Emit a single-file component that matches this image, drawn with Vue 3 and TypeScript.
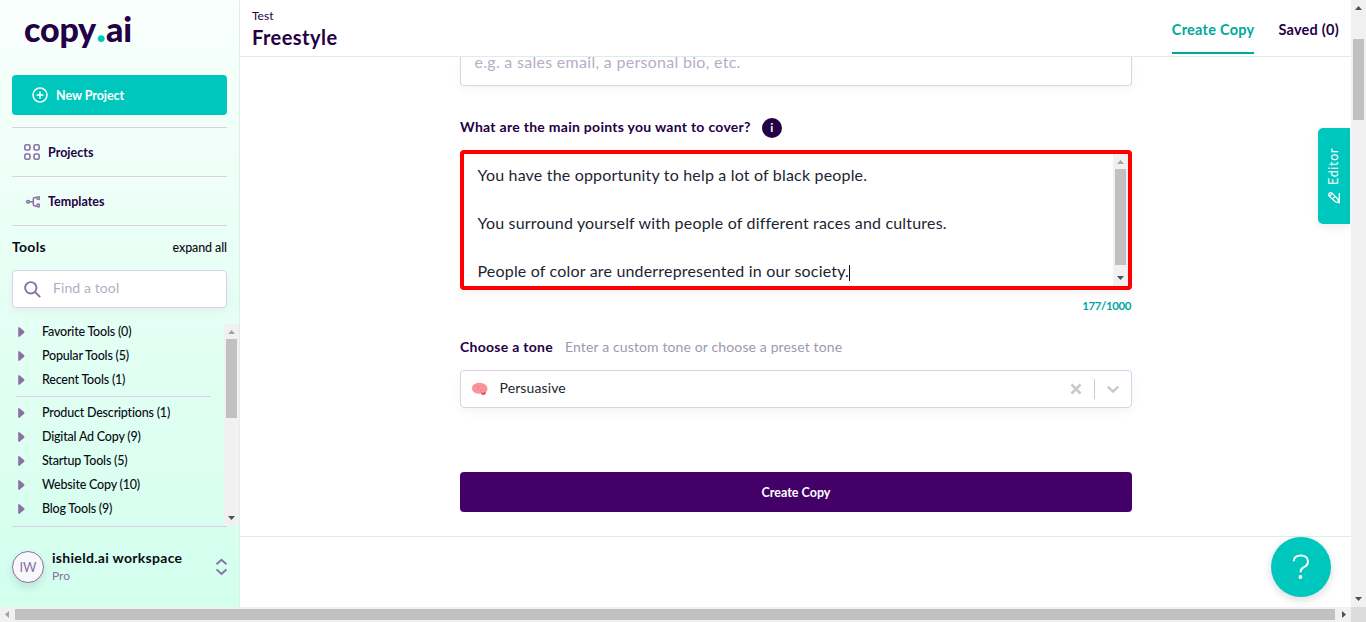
<script setup lang="ts">
interface Tool { name: string; count: number }

const pinned: Tool[] = [
  { name: 'Favorite Tools', count: 0 },
  { name: 'Popular Tools', count: 5 },
  { name: 'Recent Tools', count: 1 },
]
const categories: Tool[] = [
  { name: 'Product Descriptions', count: 1 },
  { name: 'Digital Ad Copy', count: 9 },
  { name: 'Startup Tools', count: 5 },
  { name: 'Website Copy', count: 10 },
  { name: 'Blog Tools', count: 9 },
]
const points: string[] = [
  'You have the opportunity to help a lot of black people.',
  'You surround yourself with people of different races and cultures.',
  'People of color are underrepresented in our society.',
]
</script>

<template>
  <div class="window">
    <aside class="sidebar">
      <div class="logo">copy<span class="logo-dot">.</span>ai</div>
      <button class="new-project">
        <svg width="16" height="16" viewBox="0 0 16 16" fill="none" stroke="#fff" stroke-width="1.5"><circle cx="8" cy="8" r="7" /><path d="M8 4.5v7M4.5 8h7" /></svg>
        <span>New Project</span>
      </button>
      <nav>
        <a class="nav-item">
          <svg class="nav-icon" width="16" height="16" viewBox="0 0 16 16" fill="none" stroke="#8b70a3" stroke-width="1.6"><rect x=".8" y=".8" width="5.2" height="5.2" rx="1.5" /><rect x="10" y=".8" width="5.2" height="5.2" rx="1.5" /><rect x=".8" y="10" width="5.2" height="5.2" rx="1.5" /><rect x="10" y="10" width="5.2" height="5.2" rx="1.5" /></svg>
          <span>Projects</span>
        </a>
        <a class="nav-item">
          <svg class="nav-icon" width="16" height="16" viewBox="0 0 16 16" fill="none" stroke="#8b70a3" stroke-width="1.5"><circle cx="4.1" cy="8.8" r="1.4" /><circle cx="14.2" cy="5.1" r="1.4" /><circle cx="14.2" cy="12.5" r="1.4" /><path d="M5.6 8.8h3.6M12.7 4.5h-1.8q-1.6 0-1.6 1.6v5.2q0 1.6 1.6 1.6h1.8" /></svg>
          <span>Templates</span>
        </a>
      </nav>
      <div class="tools-head"><strong>Tools</strong><span>expand all</span></div>
      <div class="search">
        <svg width="17" height="17" viewBox="0 0 17 17" fill="none" stroke="#8b70a3" stroke-width="1.9"><circle cx="6.8" cy="6.8" r="5.7" /><path d="M11 11l5.2 5.2" /></svg>
        <span>Find a tool</span>
      </div>
      <div class="tool-panel">
        <div class="tool-list">
          <div v-for="t in pinned" :key="t.name" class="tool">
            <svg width="7" height="10" viewBox="0 0 7 10"><path d="M.2.5Q.2 0 1.5.3L6 3.9Q7 5 6 6.1L1.5 9.7Q.2 10 .2 9.5z" fill="#8b70a3" /></svg>
            <span>{{ t.name }} ({{ t.count }})</span>
          </div>
          <div class="tool-rule"></div>
          <div v-for="t in categories" :key="t.name" class="tool">
            <svg width="7" height="10" viewBox="0 0 7 10"><path d="M.2.5Q.2 0 1.5.3L6 3.9Q7 5 6 6.1L1.5 9.7Q.2 10 .2 9.5z" fill="#8b70a3" /></svg>
            <span>{{ t.name }} ({{ t.count }})</span>
          </div>
        </div>
        <div class="vbar tool-bar">
          <svg class="arrow" width="15" height="15" viewBox="0 0 15 15"><path d="M4 10h7L7.5 6z" fill="#a3a3a3" /></svg>
          <div class="thumb"></div>
          <svg class="arrow" width="15" height="15" viewBox="0 0 15 15"><path d="M4 5h7L7.5 9z" fill="#505050" /></svg>
        </div>
      </div>
      <div class="workspace">
        <div class="avatar">IW</div>
        <div class="ws-text"><div class="ws-name">ishield.ai workspace</div><div class="ws-plan">Pro</div></div>
        <svg width="12" height="18" viewBox="0 0 12 18" fill="none" stroke="#8b70a3" stroke-width="1.9"><path d="M1.5 6.3l5-4.6 5 4.6M1.500 11.400l5 4.600 5-4.600" /></svg>
      </div>
    </aside>

    <main class="main">
      <header class="header">
        <div class="titles"><div class="project">Test</div><h1>Freestyle</h1></div>
        <div class="tabs"><a class="tab active">Create Copy</a><a class="tab saved">Saved (0)</a></div>
      </header>
      <section class="form">
        <div class="first-input"><span>e.g. a sales email, a personal bio, etc.</span></div>
        <div class="label-row points-label"><strong>What are the main points you want to cover?</strong><span class="info">i</span></div>
        <div class="textarea">
          <div class="text"><p v-for="(p, i) in points" :key="p">{{ p }}<i v-if="i === points.length - 1" class="caret"></i></p></div>
          <div class="vbar area-bar">
            <svg class="arrow" width="15" height="15" viewBox="0 0 15 15"><path d="M4 10h7L7.5 6z" fill="#a3a3a3" /></svg>
            <div class="thumb"></div>
            <svg class="arrow" width="15" height="15" viewBox="0 0 15 15"><path d="M4 5h7L7.5 9z" fill="#505050" /></svg>
          </div>
        </div>
        <div class="count">177/1000</div>
        <div class="label-row tone-label"><strong>Choose a tone</strong><span>Enter a custom tone or choose a preset tone</span></div>
        <div class="select">
          <svg width="18" height="16" viewBox="0 0 18 16"><path d="M.9 7C.9 4 4.3 1.7 8.5 1.700c4.500 0 8 2.400 8 6.100 0 1.700-.6 2.700-1.600 3.100.2 1.400-.7 2.600-2.200 2.700-1.300.1-2.300-.1-3.100-1.100-1.100.6-2.900.4-3.900-.1C3 12 .9 10 .9 7z" fill="#fb969a" /><path d="M9.800 11.600c1 .3 3 .1 5.100-.9.300 1.800-.8 3.300-2.300 3.400-1.400 0-2.300-.6-2.800-2.500z" fill="#d95e6b" /><path d="M3.500 6q1.500-.3 1.600-1.800M6 9q-.2-2 2-2.200.2-1.800-1-2.300M8.600 10q2.400 0 2.500-2M10.500 5q2-.4 2.600 1.200M13 9.200q1.300-.1 1.400-1.400M3.300 8.700q1 .2 1.300 1" fill="none" stroke="#e47680" stroke-width=".8" /></svg>
          <span class="value">Persuasive</span>
          <svg class="clear" width="12" height="12" viewBox="0 0 12 12" stroke="#c9c9c9" stroke-width="2.6"><path d="M1.500 1.500l9 9M10.500 1.500l-9 9" /></svg>
          <i class="divider"></i>
          <svg width="12" height="12" viewBox="0 0 12 12" fill="none" stroke="#c9c9c9" stroke-width="2.4"><path d="M.8 3.500L6 8.600 11.200 3.500" /></svg>
        </div>
        <button class="create">Create Copy</button>
      </section>
      <div class="section-rule"></div>
      <div class="editor">
        <span>Editor</span>
        <svg width="14" height="14" viewBox="0 0 14 14" fill="none" stroke="#fff" stroke-width="1.3"><path d="M2 2.600Q3.600.8 5.300 2.400L11 8.300 11.800 11.600 8.600 10.900 2.300 5.300Q.9 3.900 2 2.600zM2.600 5.200L5 2.600M5.400 7.800L8 5.400M12.300 2v10.500" /></svg>
      </div>
      <button class="help">
        <svg width="18" height="26" viewBox="0 0 18 26" fill="none" stroke="#fff" stroke-width="2"><path d="M1.700 7.300C1.700 3.800 4.500 1.500 8.700 1.500s7.300 2.300 7.300 5.900c0 3.100-1.900 4.700-4.400 6-2.200 1.100-3.100 2.100-3.100 4.900" /><circle cx="8.400" cy="23" r="1.900" fill="#fff" stroke="none" /></svg>
      </button>
    </main>

    <div class="vbar page-bar">
      <svg class="arrow" width="15" height="15" viewBox="0 0 15 15"><path d="M4 10h7L7.5 6z" fill="#505050" /></svg>
      <div class="thumb"></div>
      <svg class="arrow" width="15" height="15" viewBox="0 0 15 15"><path d="M4 5h7L7.5 9z" fill="#505050" /></svg>
    </div>
    <div class="hbar">
      <svg width="15" height="15" viewBox="0 0 15 15"><path d="M9 4v7L5 7.5z" fill="#a3a3a3" /></svg>
      <div class="hthumb"></div>
      <svg width="15" height="15" viewBox="0 0 15 15"><path d="M6 4v7l4-3.5z" fill="#505050" /></svg>
    </div>
    <div class="corner"></div>
  </div>
</template>

<style>
body { overflow: hidden; }
</style>

<style scoped>
* { box-sizing: border-box; }
.window {
  width: 1366px; height: 622px; display: grid;
  grid-template-columns: 240px 1111px 15px; grid-template-rows: 607px 15px;
  font-family: Lato, "Liberation Sans", sans-serif; color: #240046; background: #fff;
}
svg { display: block; flex: none; }
button { border: 0; font: inherit; }
.sidebar {
  display: flex; flex-direction: column; padding: 0 12px;
  background: linear-gradient(#f9fffc, #d2ffee); border-right: 1px solid #dcefe8;
}
.logo { height: 75px; padding: 8px 0 0 12px; font-size: 34px; line-height: 42px; font-weight: 900; letter-spacing: -.2px; }
.logo-dot { color: #00c7be; font-size: 42px; line-height: 0; letter-spacing: 0; }
.new-project {
  height: 40px; border-radius: 4px; background: #00c7be; color: #fff; display: flex; align-items: center;
  gap: 8px; padding: 0 20px; font-size: 12.5px; font-weight: 700; letter-spacing: -.05px; margin-bottom: 12px;
}
.nav-item {
  display: flex; align-items: center; gap: 8px; height: 49px; padding-left: 12px;
  border-top: 1px solid #ddd0e6; font-size: 12.5px; font-weight: 700; letter-spacing: .02px;
}
.search span { padding-bottom: 3px; }
.tools-head {
  height: 45px; padding-bottom: 2px; border-top: 1px solid #ddd0e6; display: flex; align-items: center; justify-content: space-between;
  color: #0b0b14; font-size: 12.5px; letter-spacing: -.1px; font-weight: 500;
}
.tools-head strong { font-size: 14px; letter-spacing: .3px; padding-bottom: 1px; }
.search {
  height: 38px; background: #fff; border: 1px solid #ddd0e6; border-radius: 4px; display: flex; align-items: center;
  padding-left: 11px; gap: 12px; color: #b9acc6; font-size: 14px; letter-spacing: .1px; box-shadow: 0 4px 10px rgba(36, 0, 70, .04);
}
.tool-panel { display: flex; width: 215px; height: 203px; margin-top: 16px; border-bottom: 1px solid #ddd0e6; }
.tool-list { width: 212px; flex: none; padding-left: 4px; margin-top: -4px; color: #0b0b14; font-size: 12.5px; font-weight: 500; letter-spacing: -.2px; }
.tool { display: flex; align-items: center; height: 24px; gap: 17px; padding-left: 2px; }
.tool span { padding-bottom: 1px; }
.tool-rule { height: 1px; background: #e2cfec; margin: 4px 13px 4px 0; }
.vbar { width: 15px; background: #f1f1f1; display: flex; flex-direction: column; justify-content: space-between; }
.thumb { width: 11px; margin: 0 2px auto; background: #c1c1c1; }
.tool-bar { flex: none; height: 202px; }
.tool-bar .thumb { height: 79px; }
.workspace { display: flex; align-items: center; height: 80px; }
.avatar {
  width: 32px; height: 32px; border: 1px solid #8b70a3; border-radius: 50%; background: #f8f7fa; color: #8b70a3;
  display: flex; align-items: center; justify-content: center; font-size: 13px; box-shadow: 0 4px 8px rgba(36, 0, 70, .12);
}
.ws-text { flex: 1; padding-left: 8px; }
.ws-name { font-size: 14px; line-height: 18px; font-weight: 700; color: #0b0b14; letter-spacing: .3px; }
.ws-plan { font-size: 12px; line-height: 18px; color: #8b70a3; }

.main { position: relative; overflow: hidden; }
.header { height: 57px; border-bottom: 1px solid #daf0e4; display: flex; justify-content: space-between; padding: 0 12px; }
.project { font-size: 12px; line-height: 16px; margin-top: 8px; }
h1 { margin: 0; font-size: 20px; line-height: 26px; font-weight: 700; letter-spacing: .45px; }
.tabs { display: flex; gap: 24px; }
.tab { height: 54px; line-height: 59px; font-size: 14.5px; font-weight: 700; letter-spacing: .25px; white-space: nowrap; }
.active { color: #00a79d; border-bottom: 2px solid #00a79d; }
.form { width: 672px; margin-left: 220px; }
.first-input {
  height: 29px; border: 1px solid #ddd0e6; border-top: 0; border-radius: 0 0 4px 4px; padding-left: 13.5px; color: #b9acc6;
  font-size: 16px; line-height: 10px; letter-spacing: .29px; box-shadow: 0 4px 10px rgba(36, 0, 70, .04);
}
.label-row { display: flex; align-items: center; font-size: 14px; letter-spacing: .28px; }
.label-row strong { padding-bottom: 2px; }
.points-label { height: 20px; margin: 32px 0 12px; gap: 11px; }
.points-label strong { padding-bottom: 3px; }
.info { width: 20px; height: 20px; border-radius: 50%; background: #240046; color: #fff; text-align: center; font-size: 12px; line-height: 20px; font-weight: 700; }
.textarea { height: 140px; border: 4px solid #f00; border-radius: 4px; display: flex; justify-content: space-between; box-shadow: 0 4px 10px rgba(36, 0, 70, .04); }
.text { padding: 9px 0 0 13.5px; font-size: 16px; line-height: 24px; color: #231f33; letter-spacing: .18px; }
.text p { margin: 0 0 24px; height: 24px; }
.caret { display: inline-block; width: 1px; height: 16px; background: #111; vertical-align: -4px; }
.area-bar .thumb { height: 96px; }
.count { margin-top: 8px; line-height: 16px; text-align: right; color: #00a79d; font-size: 11.5px; font-weight: 700; letter-spacing: -.4px; padding-right: 1px; }
.tone-label { height: 20px; margin: 23px 0 13px; gap: 12px; }
.tone-label span { color: #9b9bad; letter-spacing: .13px; padding-bottom: 2px; }
.select {
  height: 38px; border: 1px solid #ddd0e6; border-radius: 4px; display: flex; align-items: center;
  padding: 0 12px 0 10px; font-size: 14px; color: #231f33; box-shadow: 0 4px 10px rgba(0, 70, 60, .05);
}
.value { margin-left: 10.5px; flex: 1; letter-spacing: .12px; padding-bottom: 3px; }
.divider { width: 1px; height: 20px; background: #ccc; margin: 0 12px; }
.create { display: block; width: 100%; height: 40px; margin-top: 64px; border-radius: 4px; background: #430068; color: #fff; font-size: 12.5px; font-weight: 700; }
.section-rule { height: 1px; margin-top: 24px; background: #daf0e4; }
.editor {
  position: absolute; right: 1px; top: 128px; width: 32px; height: 96px; background: #00c7be; border-radius: 5px 0 0 5px;
  display: flex; flex-direction: column; align-items: center; color: #fff; padding-top: 19px; gap: 6px; box-shadow: 0 3px 10px rgba(0, 0, 0, .08);
}
.editor span { writing-mode: vertical-rl; transform: rotate(180deg); height: 38px; font-size: 12.5px; line-height: 16px; letter-spacing: .7px; }
.help {
  position: absolute; right: 20px; top: 537px; width: 60px; height: 60px; border-radius: 50%; background: #00c7be;
  display: flex; align-items: center; justify-content: center; box-shadow: 0 3px 9px rgba(0, 0, 0, .15);
}
.page-bar .thumb { height: 81px; margin-top: 24px; }
.hbar { grid-column: 1 / 3; background: #f1f1f1; display: flex; align-items: center; justify-content: space-between; }
.hthumb { width: 1320px; height: 11px; background: #c1c1c1; margin-right: auto; }
.corner { background: #dcdcdc; }
</style>
